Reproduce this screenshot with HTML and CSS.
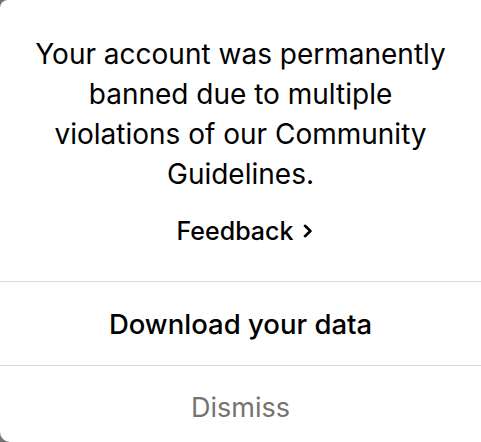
FILE: index.html
```html
<!DOCTYPE html>
<html lang="en">
<head>
  <meta charset="UTF-8" />
  <meta name="viewport" content="width=device-width, initial-scale=1.0" />
  <title>Account banned</title>
  <link rel="stylesheet" href="styles.css">
</head>
<body>
  <div class="dialog">
    <div class="message">
      <p class="notice">Your account was permanently banned due to multiple violations of our Community Guidelines.</p>
      <a class="feedback" href="#">Feedback
        <svg class="chevron" viewBox="0 0 12 14" width="12" height="14" aria-hidden="true">
          <path d="M3 1.8 L8.4 7 L3 12.2" fill="none" stroke="#000" stroke-width="2.6" stroke-linecap="round" stroke-linejoin="round" />
        </svg>
      </a>
    </div>
    <button class="action action-main">Download your data</button>
    <button class="action action-dismiss">Dismiss</button>
  </div>
</body>
</html>
```

FILE: styles.css
```css
:root {
  --divider: #dbdbdb;
}

html, body {
  margin: 0;
  height: 100%;
}

body {
  background-color: #737373;
  font-family: Inter, "Noto Sans", sans-serif;
  color: #000;
}

.dialog {
  background-color: #fff;
  height: 100%;
  display: flex;
  flex-direction: column;
  border-top-left-radius: 8px;
  border-bottom-left-radius: 10px;
}

.message {
  flex-shrink: 0;
  display: flex;
  flex-direction: column;
  align-items: center;
  padding: 34px 24px 0;
  height: 281px;
  box-sizing: border-box;
}

.notice {
  margin: 0;
  font-size: 28px;
  line-height: 40px;
  text-align: center;
}

.feedback {
  margin-top: 22px;
  margin-left: 10px;
  display: flex;
  align-items: center;
  gap: 9px;
  font-size: 25px;
  font-weight: 500;
  color: #000;
  text-decoration: none;
}

.action {
  flex-shrink: 0;
  display: block;
  width: 100%;
  height: 84px;
  border: 0;
  border-top: 1px solid var(--divider);
  background: none;
  font-family: inherit;
  font-size: 27.5px;
  padding: 0;
}

.action-main {
  font-weight: 500;
  color: #000;
}

.action-dismiss {
  font-size: 27px;
  color: #737373;
}
```
